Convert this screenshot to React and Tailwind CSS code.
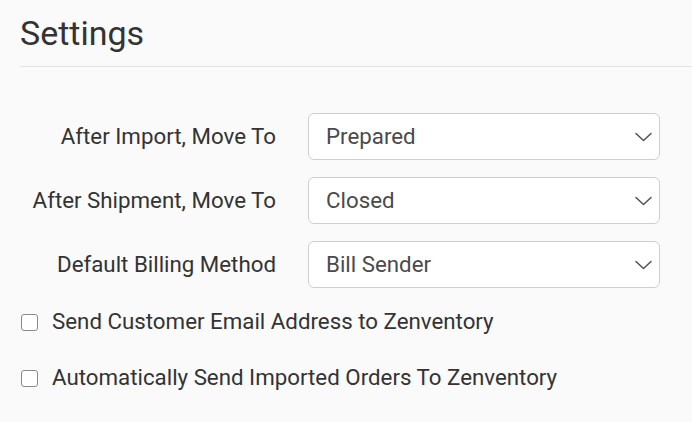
const rows = [
  { label: 'After Import, Move To', value: 'Prepared' },
  { label: 'After Shipment, Move To', value: 'Closed' },
  { label: 'Default Billing Method', value: 'Bill Sender' },
]

const checks = ['Send Customer Email Address to Zenventory', 'Automatically Send Imported Orders To Zenventory']

function SelectBox({ value }) {
  return (
    <div className="flex items-center justify-between w-[352px] h-[47px] pl-[17px] pr-[7px] bg-white border border-[#cfcfcf] rounded-[6px]">
      <span className="text-[22.3px] text-[#4a4a4a]">{value}</span>
      <svg width="17" height="10" viewBox="0 0 17 10" fill="none" stroke="#555" strokeWidth="1.6" strokeLinecap="round" strokeLinejoin="round">
        <polyline points="1,1.5 8.5,8.5 16,1.5" />
      </svg>
    </div>
  )
}

export default function App() {
  return (
    <div className="min-h-[422px] bg-[#fafafa] pl-5 pt-[12px] font-['Roboto',sans-serif] text-[#333]">
      <h1 className="text-[34px] leading-[42px] pb-[12px] border-b border-[#e3e3e3]">Settings</h1>

      <div className="flex flex-col gap-[17px] mt-[46px]">
        {rows.map(r => (
          <div key={r.label} className="flex items-center gap-[32px]">
            <label className="w-[256px] text-right text-[22.3px] whitespace-nowrap">{r.label}</label>
            <SelectBox value={r.value} />
          </div>
        ))}
      </div>

      <div className="flex flex-col gap-[32px] mt-[22px]">
        {checks.map(c => (
          <label key={c} className="flex items-center gap-[14px] h-[24px]">
            <span className="w-[17px] h-[17px] ml-px rounded-[3px] border border-[#8a8a8a] bg-white shrink-0" />
            <span className="text-[22.3px]">{c}</span>
          </label>
        ))}
      </div>
    </div>
  )
}
